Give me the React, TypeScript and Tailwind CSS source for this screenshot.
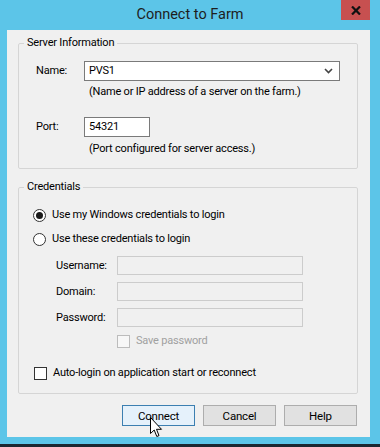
import React from "react";

const font = { fontFamily: 'Roboto, "Noto Sans", sans-serif' };

function Radio({ checked }: { checked?: boolean }) {
  return (
    <span className="w-[13px] h-[13px] rounded-full border border-[#333] bg-white flex items-center justify-center shrink-0">
      {checked && <span className="w-[7px] h-[7px] rounded-full bg-[#1a1a1a]" />}
    </span>
  );
}

function Check({ disabled }: { disabled?: boolean }) {
  return (
    <span
      className={
        disabled
          ? "w-[13px] h-[13px] border border-[#bcbcbc] bg-[#f7f7f7] shrink-0"
          : "w-[13px] h-[13px] border border-[#333] bg-white shrink-0"
      }
    />
  );
}

export default function App() {
  return (
    <div
      className="w-[380px] h-[447px] bg-[#5cc5e8] flex flex-col text-[11px] tracking-[-0.2px] text-[#000] leading-[16px] relative overflow-hidden"
      style={font}
    >
      {/* Title bar */}
      <div className="h-[30px] relative flex items-center justify-center shrink-0">
        <span className="text-[14.5px] tracking-normal text-[#1e1e1e] leading-[20px] -mt-[1px]">Connect to Farm</span>
        <div className="absolute right-[10px] top-0 w-[29px] h-[20px] bg-[#c75050] flex items-center justify-center">
          <svg width="10" height="9" viewBox="0 0 10 9">
            <path d="M1 0.5 L9 8.5 M9 0.5 L1 8.5" stroke="#111" strokeWidth="2.2" />
          </svg>
        </div>
      </div>

      {/* Client area */}
      <div className="ml-[7px] w-[363px] h-[407px] bg-[#f0f0f0] flex flex-col shrink-0">
        {/* Server Information */}
        <fieldset className="ml-[11px] w-[340px] mt-[5px] border border-[#d5d5d5] rounded-[2px] pb-[11px]">
          <legend className="ml-[5px] px-[3px] leading-[16px]">Server Information</legend>
          <div className="flex items-center mt-[10px] pl-[17px]">
            <span className="w-[48px]">Name:</span>
            <div className="w-[256px] h-[20px] border border-[#7a7a7a] bg-white flex items-center justify-between pl-[4px] pr-[6px]">
              <span>PVS1</span>
              <svg width="9" height="6" viewBox="0 0 9 6">
                <path d="M1 1 L4.5 4.5 L8 1" stroke="#444" strokeWidth="1.6" fill="none" />
              </svg>
            </div>
          </div>
          <div className="pl-[70px] mt-[3px]">(Name or IP address of a server on the farm.)</div>
          <div className="flex items-center mt-[17px] pl-[17px]">
            <span className="w-[48px]">Port:</span>
            <div className="w-[66px] h-[20px] border border-[#7a7a7a] bg-white flex items-center pl-[4px]">
              <span>54321</span>
            </div>
          </div>
          <div className="pl-[70px] mt-[4px]">(Port configured for server access.)</div>
        </fieldset>

        {/* Credentials */}
        <fieldset className="ml-[11px] w-[340px] mt-[10px] border border-[#d5d5d5] rounded-[2px] pb-[12px]">
          <legend className="ml-[5px] px-[3px] leading-[16px]">Credentials</legend>
          <div className="flex items-center gap-[6px] mt-[12px] pl-[14px]">
            <Radio checked />
            <span>Use my Windows credentials to login</span>
          </div>
          <div className="flex items-center gap-[6px] mt-[8px] pl-[14px]">
            <Radio />
            <span>Use these credentials to login</span>
          </div>
          <div className="flex items-center mt-[9px] pl-[37px]">
            <span className="w-[61px]">Username:</span>
            <div className="w-[186px] h-[19px] border border-[#cccccc] bg-[#f0f0f0]" />
          </div>
          <div className="flex items-center mt-[7px] pl-[37px]">
            <span className="w-[61px]">Domain:</span>
            <div className="w-[186px] h-[19px] border border-[#cccccc] bg-[#f0f0f0]" />
          </div>
          <div className="flex items-center mt-[7px] pl-[37px]">
            <span className="w-[61px]">Password:</span>
            <div className="w-[186px] h-[19px] border border-[#cccccc] bg-[#f0f0f0]" />
          </div>
          <div className="flex items-center gap-[6px] mt-[6px] pl-[98px]">
            <Check disabled />
            <span className="text-[#a0a0a0]">Save password</span>
          </div>
          <div className="flex items-center gap-[6px] mt-[16px] pl-[15px]">
            <Check />
            <span>Auto-login on application start or reconnect</span>
          </div>
        </fieldset>

        {/* Buttons */}
        <div className="flex justify-end gap-[8px] mt-[11px] pr-[13px]">
          <button className="w-[73px] h-[21px] border border-[#3c7fb1] bg-[#e5f1fb] text-[11.5px] tracking-[-0.2px] leading-[16px]">
            Connect
          </button>
          <button className="w-[73px] h-[21px] border border-[#adadad] bg-[#e1e1e1] text-[11.5px] tracking-[-0.2px] leading-[16px]">
            Cancel
          </button>
          <button className="w-[73px] h-[21px] border border-[#adadad] bg-[#e1e1e1] text-[11.5px] tracking-[-0.2px] leading-[16px]">
            Help
          </button>
        </div>
      </div>

      <div className="mt-auto h-[3px] bg-[#1b2731] shrink-0" />

      {/* Mouse cursor */}
      <svg
        className="absolute left-[150px] top-[417px]"
        width="13"
        height="21"
        viewBox="0 0 13 21"
      >
        <path
          d="M0.5 0.5 L0.5 16.5 L4.2 13 L6.8 19.5 L9 18.6 L6.5 12.3 L11.5 12.3 Z"
          fill="#fff"
          stroke="#000"
          strokeWidth="1"
          strokeLinejoin="round"
        />
      </svg>
    </div>
  );
}
